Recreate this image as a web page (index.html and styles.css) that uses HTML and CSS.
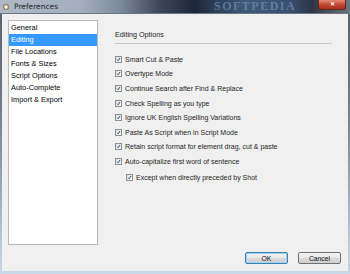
FILE: index.html
```html
<!DOCTYPE html>
<html lang="en">
<head>
    <meta charset="UTF-8">
    <title>Preferences</title>
    <link rel="stylesheet" href="styles.css">
</head>
<body>
    <div class="window">
        <div class="titlebar">
            <span class="app-icon"></span>
            <span class="title">Preferences</span>
            <span class="watermark">SOFTPEDIA</span>
            <span class="close">&#x2715;</span>
        </div>
        <div class="client">
            <div class="main">
                <ul class="categories">
                    <li>General</li>
                    <li class="selected">Editing</li>
                    <li>File Locations</li>
                    <li>Fonts &amp; Sizes</li>
                    <li>Script Options</li>
                    <li>Auto-Complete</li>
                    <li>Import &amp; Export</li>
                </ul>
                <div class="pane">
                    <div class="heading">Editing Options</div>
                    <div class="options">
                        <label class="option"><span class="cb"><svg viewBox="0 0 7 7"><path d="M1.5 3.8 L3 5.3 L5.6 1.4"/></svg></span>Smart Cut &amp; Paste</label>
                        <label class="option"><span class="cb"><svg viewBox="0 0 7 7"><path d="M1.5 3.8 L3 5.3 L5.6 1.4"/></svg></span>Overtype Mode</label>
                        <label class="option"><span class="cb"><svg viewBox="0 0 7 7"><path d="M1.5 3.8 L3 5.3 L5.6 1.4"/></svg></span>Continue Search after Find &amp; Replace</label>
                        <label class="option"><span class="cb"><svg viewBox="0 0 7 7"><path d="M1.5 3.8 L3 5.3 L5.6 1.4"/></svg></span>Check Spelling as you type</label>
                        <label class="option"><span class="cb"><svg viewBox="0 0 7 7"><path d="M1.5 3.8 L3 5.3 L5.6 1.4"/></svg></span>Ignore UK English Spelling Variations</label>
                        <label class="option"><span class="cb"><svg viewBox="0 0 7 7"><path d="M1.5 3.8 L3 5.3 L5.6 1.4"/></svg></span>Paste As Script when in Script Mode</label>
                        <label class="option"><span class="cb"><svg viewBox="0 0 7 7"><path d="M1.5 3.8 L3 5.3 L5.6 1.4"/></svg></span>Retain script format for element drag, cut &amp; paste</label>
                        <label class="option"><span class="cb"><svg viewBox="0 0 7 7"><path d="M1.5 3.8 L3 5.3 L5.6 1.4"/></svg></span>Auto-capitalize first word of sentence</label>
                        <label class="option sub"><span class="cb"><svg viewBox="0 0 7 7"><path d="M1.5 3.8 L3 5.3 L5.6 1.4"/></svg></span>Except when directly preceded by Shot</label>
                    </div>
                </div>
            </div>
            <div class="footer">
                <button class="btn default">OK</button>
                <button class="btn">Cancel</button>
            </div>
        </div>
    </div>
</body>
</html>
```

FILE: styles.css
```css
body {
    margin: 0;
    font-family: "Liberation Sans", Arial, sans-serif;
    background-color: #fff;
}
.window {
    width: 350px;
    height: 274px;
    display: flex;
    flex-direction: column;
    background: linear-gradient(to bottom, #56606c 0, #6f7d8c 40%, #a9bccd 80%, #c9d8e6 100%);
}
.titlebar {
    position: relative;
    height: 13px;
    display: flex;
    align-items: center;
    background: linear-gradient(to right, #aeb9c5 0, #a3afbd 80px, #7d8a99 120px, #3c4658 160px, #1d2739 195px, #2c3e58 215px, #3f5978 245px, #3a5070 290px, #2b3545 312px, #535e6b 335px, #6c7683 350px);
    border-bottom: 1px solid #6a7684;
}
.app-icon {
    width: 6px;
    height: 6px;
    margin-left: 3px;
    border-radius: 50%;
    background: radial-gradient(circle, #fff 0, #fff 1px, #e39a2a 2px, #3b6fb8 3px);
}
.title {
    margin-left: 5px;
    font-family: "DejaVu Sans", sans-serif;
    font-size: 7.5px;
    color: #1a1f26;
}
.watermark {
    position: absolute;
    left: 214px;
    top: 0;
    height: 13px;
    line-height: 13px;
    font-family: "Liberation Serif", serif;
    font-weight: bold;
    font-size: 12px;
    letter-spacing: 1.5px;
    color: #7f9fc2;
    opacity: 0.55;
}
.close {
    position: absolute;
    right: 4px;
    top: 0;
    width: 26px;
    height: 9px;
    line-height: 9px;
    text-align: center;
    font-size: 6px;
    font-weight: bold;
    color: #fff;
    background: linear-gradient(to bottom, #e08a78, #c4412a 55%, #a8321d);
    border: 1px solid #5b2a22;
    border-top: none;
    border-radius: 0 0 3px 3px;
}
.client {
    flex: 1;
    margin: 0 2px 3px 2px;
    background-color: #f0f0f0;
    display: flex;
    flex-direction: column;
    padding: 6px 7px 7px 6px;
}
.main {
    display: flex;
    height: 225px;
}
.categories {
    list-style: none;
    margin: 0;
    padding: 1px 0 0 0;
    width: 88px;
    height: 222px;
    background-color: #fff;
    border: 1px solid #b6b9bf;
}
.categories li {
    height: 12px;
    line-height: 12px;
    padding-left: 2px;
    font-size: 7.4px;
    color: #000;
    white-space: nowrap;
}
.categories li.selected {
    background-color: #3399ff;
    color: #fff;
}
.pane {
    flex: 1;
    padding: 10px 9px 0 17px;
}
.heading {
    font-size: 7.2px;
    height: 10px;
    line-height: 10px;
    color: #1e1e1e;
    padding-bottom: 3px;
    border-bottom: 1px solid #c9c9c9;
}
.options {
    display: flex;
    flex-direction: column;
    padding-top: 8px;
}
.option {
    display: flex;
    align-items: center;
    height: 14.6px;
    font-size: 7px;
    color: #1e1e1e;
    white-space: nowrap;
}
.option.sub {
    margin-top: 1.7px;
    padding-left: 11px;
}
.cb {
    width: 5px;
    height: 5px;
    margin-right: 3px;
    border: 1px solid #8e8f8f;
    background: linear-gradient(135deg, #dcdcdc, #fbfbfb);
    display: flex;
}
.cb svg {
    width: 5px;
    height: 5px;
    fill: none;
    stroke: #26408a;
    stroke-width: 1.3;
}
.footer {
    display: flex;
    justify-content: flex-end;
    gap: 10px;
    margin-top: 7px;
}
.btn {
    width: 43px;
    height: 12px;
    padding: 0;
    font-family: "Liberation Sans", Arial, sans-serif;
    font-size: 6.8px;
    color: #111;
    border: 1px solid #707070;
    border-radius: 2px;
    background: linear-gradient(to bottom, #f4f4f4 0, #e8e8e8 50%, #d9d9d9 51%, #cfcfcf 100%);
}
.btn.default {
    border-color: #3c7fb1;
    box-shadow: inset 0 0 0 1px #9ad3f0;
}
```
